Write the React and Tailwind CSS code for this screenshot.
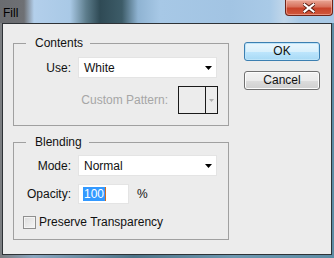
import { useState } from "react";

const font = { fontFamily: '"Liberation Sans", Arial, sans-serif' };

const Arrow = ({ color = "#000" }) => (
  <svg width="7" height="4" viewBox="0 0 7 4">
    <path d="M0 0h7L3.5 4z" fill={color} />
  </svg>
);

const Select = ({ value }) => (
  <div className="flex h-[21px] w-[139px] items-center justify-between border border-[#e4e4e4] bg-white pl-[5px] pr-[4px] text-[#111]">
    <span>{value}</span>
    <Arrow />
  </div>
);

const Group = ({ title, className, children }) => (
  <fieldset className={"w-[216px] border border-[#a0a0a0] " + className}>
    <legend className="ml-[12px] px-[9px] pr-[7px] leading-[14px] text-[#111]">{title}</legend>
    {children}
  </fieldset>
);

const Button = ({ label, primary }) => (
  <button
    className={
      primary
        ? "h-[19px] w-[76px] rounded-[3px] border border-[#3c7fb1] bg-[linear-gradient(#eaf6fd,#d9f0fc_50%,#bee6fd_51%,#a7d9f5)] leading-[17px] text-[#111] shadow-[inset_0_0_0_1px_#bde4f9]"
        : "h-[19px] w-[76px] rounded-[3px] border border-[#707070] bg-[linear-gradient(#f2f2f2,#ebebeb_50%,#dddddd_51%,#cfcfcf)] leading-[17px] text-[#111] shadow-[inset_0_0_0_1px_#fcfcfc]"
    }
  >
    {label}
  </button>
);

export default function App() {
  const [keep, setKeep] = useState(false);

  return (
    <div
      className="flex h-[258px] w-[334px] flex-col overflow-hidden bg-[linear-gradient(90deg,#7b7d80_0%,#8aa7c0_10%,#4d7488_40%,#6d98b0_70%,#5d8ca4_100%)] text-[12px]"
      style={font}
    >
      {/* title bar */}
      <div className="flex h-[23px] shrink-0 items-start justify-between bg-[linear-gradient(90deg,#6a6c70_0px,#6e7074_24px,#b3cfeb_34px,#a9c9e6_70px,#5d7d8c_86px,#2f4a55_100px,#3d5c68_122px,#8fb3d2_138px,#a7c8e6_160px,#a2c4e3_230px,#a9cae7_270px,#c0d6ea_284px,#a8c9e6_300px)]">
        <span className="ml-[3px] mt-[4px] text-[12px] text-black">Fill</span>
        <div className="mr-[1px] flex h-[16px] w-[48px] items-center justify-center rounded-b-[4px] border border-t-0 border-[#6e2418] bg-[linear-gradient(#e9a796,#d8715c_45%,#c8432a_55%,#d0573c)] shadow-[inset_0_0_0_1px_rgba(255,200,190,0.5)]">
          <svg width="12" height="10" viewBox="0 0 12 10">
            <path
              d="M1.5 1.5l9 7M10.5 1.5l-9 7"
              stroke="#5a1a10"
              strokeWidth="4"
              strokeLinecap="square"
            />
            <path
              d="M1.5 1.5l9 7M10.5 1.5l-9 7"
              stroke="#fff"
              strokeWidth="2.2"
              strokeLinecap="square"
            />
          </svg>
        </div>
      </div>

      {/* client */}
      <div className="ml-[2px] mr-[2px] flex h-[232px] shrink-0 border border-[#2e3236] bg-[#ececec]">
        <div className="flex flex-col pl-[10px]">
          <Group title="Contents" className="mt-[12px] pb-[11px]">
            <div className="mt-[7px] flex items-center">
              <span className="w-[58px] pr-[1px] text-right text-[#111]">Use:</span>
              <div className="ml-[6px]">
                <Select value="White" />
              </div>
            </div>
            <div className="mt-[8px] flex items-center justify-end pr-[10px]">
              <span className="mr-[10px] text-[#a6a6a6]">Custom Pattern:</span>
              <div className="flex h-[28px] w-[40px] border border-[#1a1a1a] bg-[#ececec]">
                <div className="w-[27px] border-r border-[#1a1a1a]" />
                <div className="flex flex-1 items-center justify-center">
                  <svg width="5" height="3" viewBox="0 0 5 3">
                    <path d="M0 0h5L2.5 3z" fill="#b0b0b0" />
                  </svg>
                </div>
              </div>
            </div>
          </Group>

          <Group title="Blending" className="mt-[9px] pb-[8px]">
            <div className="mt-[6px] flex items-center">
              <span className="w-[58px] pr-[1px] text-right text-[#111]">Mode:</span>
              <div className="ml-[6px]">
                <Select value="Normal" />
              </div>
            </div>
            <div className="mt-[8px] flex items-center">
              <span className="w-[58px] pr-[1px] text-right text-[#111]">Opacity:</span>
              <div className="ml-[6px] flex h-[20px] w-[51px] items-center border border-[#e4e4e4] bg-white pl-[4px]">
                <span className="bg-[#3399ff] px-[1px] leading-[14px] text-white">100</span>
                <span className="h-[14px] w-[1px] bg-[#d46a1a]" />
              </div>
              <span className="ml-[8px] text-[#111]">%</span>
            </div>
            <label className="ml-[9px] mt-[9px] flex items-center">
              <span
                onClick={() => setKeep(!keep)}
                className="h-[13px] w-[13px] border border-[#8f8f8f] bg-[linear-gradient(135deg,#dcdcdc,#f6f6f6)] shadow-[inset_0_0_0_1px_#f4f4f4]"
              />
              <span className="ml-[3px] text-[#111]">Preserve Transparency</span>
            </label>
          </Group>
        </div>

        <div className="ml-[15px] mt-[18px] flex flex-col gap-[10px]">
          <Button label="OK" primary />
          <Button label="Cancel" />
        </div>
      </div>
    </div>
  );
}
